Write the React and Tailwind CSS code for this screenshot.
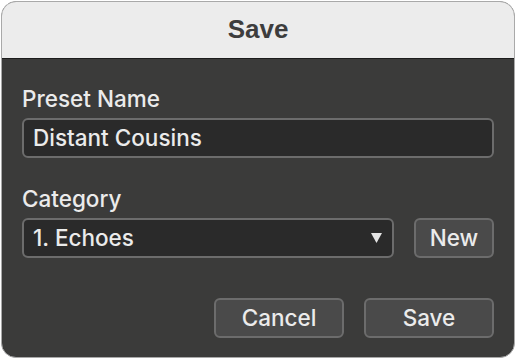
export default function App() {
    return (
        <div className="w-[516px] h-[360px] bg-white p-[1px] pr-[1px]">
            <div className="w-[514px] h-[357px] rounded-[15px] border border-[#a9a9a9] overflow-hidden flex flex-col bg-[#3b3b3a]">
                {/* Title bar */}
                <div className="h-[57px] shrink-0 bg-[#ececec] border-b border-[#1c1c1c] flex items-center justify-center pb-[3px]">
                    <span className="font-['Liberation_Sans',Arial,sans-serif] font-bold text-[26px] text-[#3d3d3d] leading-none">
                        Save
                    </span>
                </div>

                {/* Body */}
                <div className="flex flex-col px-[20px] pt-[27px] font-['Inter',sans-serif] font-medium text-[#ebebeb]">
                    <label className="text-[22.5px] leading-[26px] h-[32px]">Preset Name</label>
                    <div className="h-[40px] rounded-[6px] border-2 border-[#6c6c6c] bg-[#2a2a2a] flex items-center px-[9px]">
                        <span className="text-[22.5px] leading-none">Distant Cousins</span>
                    </div>

                    <label className="text-[22.5px] leading-[26px] h-[32px] mt-[28px]">Category</label>
                    <div className="flex gap-[20px]">
                        <div className="flex-1 h-[40px] rounded-[6px] border-2 border-[#6c6c6c] bg-[#2a2a2a] flex items-center justify-between pl-[9px] pr-[10px]">
                            <span className="text-[22.5px] leading-none">1. Echoes</span>
                            <svg width="11" height="10" viewBox="0 0 11 10">
                                <path d="M0 0 L11 0 L5.5 10 Z" fill="#e4e4e4" />
                            </svg>
                        </div>
                        <button className="w-[80px] h-[40px] rounded-[6px] border-2 border-[#6c6c6c] bg-[#4a4a4a] text-[22.5px] leading-none text-[#ebebeb]">
                            New
                        </button>
                    </div>

                    <div className="flex justify-end gap-[20px] mt-[40px]">
                        <button className="w-[130px] h-[40px] rounded-[6px] border-2 border-[#6c6c6c] bg-[#4a4a4a] text-[22.5px] leading-none text-[#ebebeb]">
                            Cancel
                        </button>
                        <button className="w-[130px] h-[40px] rounded-[6px] border-2 border-[#6c6c6c] bg-[#4a4a4a] text-[22.5px] leading-none text-[#ebebeb]">
                            Save
                        </button>
                    </div>
                </div>
            </div>
        </div>
    );
}
